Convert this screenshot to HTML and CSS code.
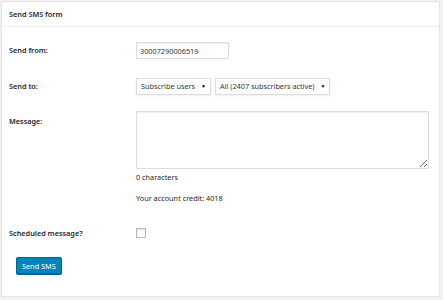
FILE: index.html
```html
<!DOCTYPE html>
<html lang="en">
<head>
    <meta charset="UTF-8">
    <meta name="viewport" content="width=device-width, initial-scale=1.0">
    <title>Send SMS</title>
    <link rel="stylesheet" href="styles.css">
</head>
<body>
    <div class="postbox">
        <h2 class="hndle">Send SMS form</h2>
        <div class="inside">
            <div class="form-row row-from">
                <label class="label" for="from">Send from:</label>
                <div class="field">
                    <input class="text" id="from" type="text" value="30007290006519">
                </div>
            </div>
            <div class="form-row row-to">
                <label class="label">Send to:</label>
                <div class="field">
                    <div class="select">Subscribe users <span class="arrow">&#9660;</span></div>
                    <div class="select">All (2407 subscribers active) <span class="arrow">&#9660;</span></div>
                </div>
            </div>
            <div class="form-row row-msg">
                <label class="label" for="msg">Message:</label>
                <div class="field">
                    <textarea id="msg" class="message"></textarea>
                    <p class="note">0 characters</p>
                    <p class="note credit">Your account credit: 4018</p>
                </div>
            </div>
            <div class="form-row row-sched">
                <label class="label">Scheduled message?</label>
                <div class="field">
                    <span class="checkbox"></span>
                </div>
            </div>
            <div class="submit">
                <button class="button-primary">Send SMS</button>
            </div>
        </div>
    </div>
</body>
</html>
```

FILE: styles.css
```css
body {
    margin: 0;
    padding: 1px 0 0 1px;
    background-color: #f1f1f1;
    font-family: "Noto Sans", "Open Sans", sans-serif;
    font-size: 7.3px;
    color: #23282d;
}
.postbox {
    width: 437px;
    height: 294px;
    background-color: #fff;
    border: 1px solid #e5e5e5;
    box-shadow: 0 1px 1px rgba(0, 0, 0, 0.04);
}
.hndle {
    margin: 0;
    height: 24px;
    line-height: 25px;
    padding: 0 7px;
    font-size: 7.3px;
    font-weight: 600;
    border-bottom: 1px solid #eee;
}
.inside {
    padding: 15px 7px 0;
}
.form-row {
    display: grid;
    grid-template-columns: 127px 1fr;
    align-items: start;
}
.row-from {
    margin-bottom: 19px;
}
.row-to {
    margin-bottom: 16px;
}
.row-msg {
    margin-bottom: 23px;
}
.label {
    font-weight: 600;
    padding-top: 3px;
}
.row-msg .label {
    padding-top: 5px;
}
.row-sched .label {
    padding-top: 1px;
}
.field {
    display: flex;
    flex-wrap: wrap;
    gap: 4px;
}
.text {
    width: 93px;
    height: 17px;
    box-sizing: border-box;
    border: 1px solid #ddd;
    box-shadow: inset 0 1px 2px rgba(0, 0, 0, 0.07);
    font-family: inherit;
    font-size: 7.3px;
    padding: 0 3px;
    color: #32373c;
}
.select {
    height: 17px;
    line-height: 15px;
    box-sizing: border-box;
    border: 1px solid #ddd;
    padding: 0 4px;
    color: #32373c;
    box-shadow: 0 1px 2px rgba(0, 0, 0, 0.07);
}
.arrow {
    font-size: 5px;
    margin-left: 4px;
    vertical-align: 1px;
    color: #000;
}
.message {
    width: 293px;
    height: 58px;
    box-sizing: border-box;
    border: 1px solid #ddd;
    box-shadow: inset 0 1px 2px rgba(0, 0, 0, 0.07);
    margin: 0 0 -2px;
}
.note {
    margin: 0;
    width: 100%;
    line-height: 12px;
}
.credit {
    margin-top: 5px;
}
.checkbox {
    display: block;
    width: 8px;
    height: 8px;
    border: 1px solid #b4b9be;
    margin-top: 1px;
    box-shadow: inset 0 1px 2px rgba(0, 0, 0, 0.1);
}
.submit {
    padding: 19px 7px 0;
}
.button-primary {
    height: 17px;
    padding: 0 5px;
    background-color: #0085ba;
    border: 1px solid #006799;
    border-radius: 2px;
    box-shadow: 0 1px 0 #006799;
    color: #fff;
    font-family: inherit;
    font-size: 7.3px;
}
```
